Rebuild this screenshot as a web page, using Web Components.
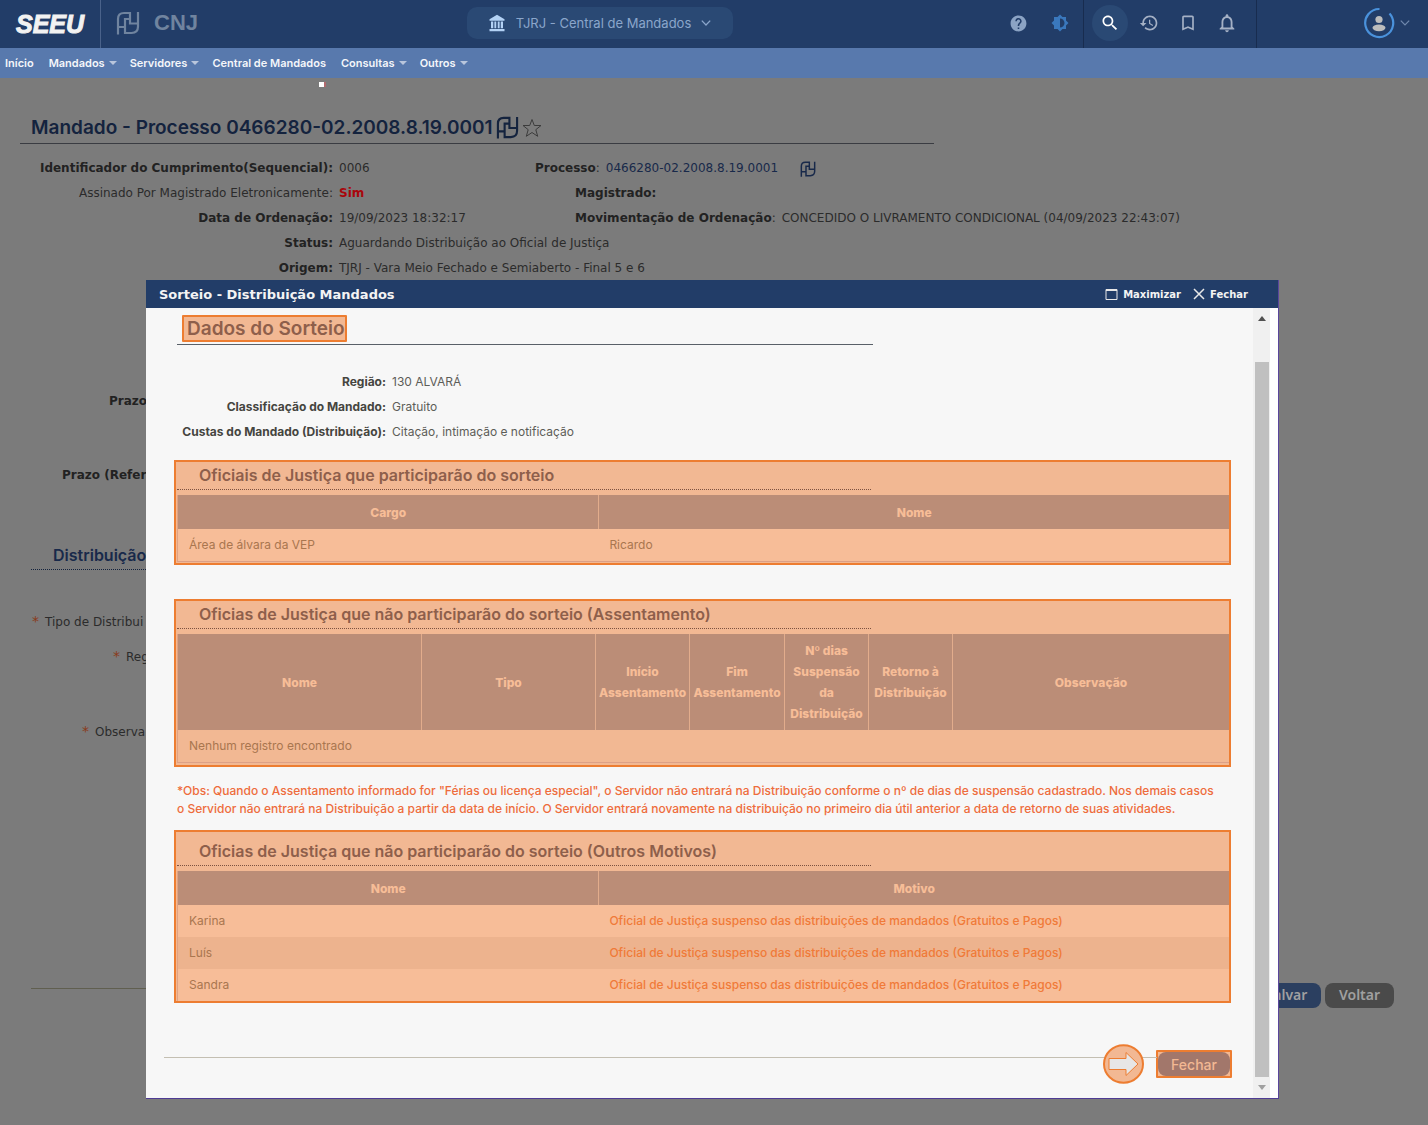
<!DOCTYPE html>
<html lang="pt-BR">
<head>
<meta charset="utf-8">
<title>SEEU - Central de Mandados</title>
<style>
  html { background: #7b7b7b; }
  body { margin: 0; font-family: Inter, "Liberation Sans", sans-serif; font-size: 12px; color: #222; }
</style>
</head>
<body>
<seeu-page></seeu-page>
<script>
const ICONS = {
  help: 'M12 2C6.48 2 2 6.48 2 12s4.48 10 10 10 10-4.48 10-10S17.52 2 12 2zm1 17h-2v-2h2v2zm2.07-7.75l-.9.92C13.45 12.9 13 13.5 13 15h-2v-.5c0-1.1.45-2.1 1.17-2.83l1.24-1.26c.37-.36.59-.86.59-1.41 0-1.1-.9-2-2-2s-2 .9-2 2H8c0-2.21 1.79-4 4-4s4 1.79 4 4c0 .88-.36 1.68-.93 2.25z',
  contrast: 'M20 8.69V4h-4.69L12 .69 8.69 4H4v4.69L.69 12 4 15.31V20h4.69L12 23.31 15.31 20H20v-4.69L23.31 12 20 8.69zM12 18V6c3.31 0 6 2.69 6 6s-2.69 6-6 6z',
  search: 'M15.5 14h-.79l-.28-.27C15.41 12.59 16 11.11 16 9.5 16 5.91 13.09 3 9.5 3S3 5.91 3 9.5 5.91 16 9.5 16c1.61 0 3.09-.59 4.23-1.57l.27.28v.79l5 4.99L20.49 19l-4.99-5zm-6 0C7.01 14 5 11.99 5 9.5S7.01 5 9.5 5 14 7.01 14 9.5 11.99 14 9.5 14z',
  history: 'M13 3c-4.97 0-9 4.03-9 9H1l3.89 3.89.07.14L9 12H6c0-3.87 3.13-7 7-7s7 3.13 7 7-3.13 7-7 7c-1.93 0-3.68-.79-4.94-2.06l-1.42 1.42C8.27 19.99 10.51 21 13 21c4.97 0 9-4.03 9-9s-4.03-9-9-9zm-1 5v5l4.28 2.54.72-1.21-3.5-2.08V8H12z',
  bookmark: 'M17 3H7c-1.1 0-2 .9-2 2v16l7-3 7 3V5c0-1.1-.9-2-2-2zm0 15l-5-2.18L7 18V5h10v13z',
  bell: 'M12 22c1.1 0 2-.9 2-2h-4c0 1.1.89 2 2 2zm6-6v-5c0-3.07-1.64-5.64-4.5-6.32V4c0-.83-.67-1.5-1.5-1.5s-1.5.67-1.5 1.5v.68C7.63 5.36 6 7.92 6 11v5l-2 2v1h16v-1l-2-2zm-2 1H8v-6c0-2.48 1.51-4.5 4-4.5s4 2.02 4 4.5v6z',
  court: 'M12 1L2 7v2h20V7L12 1zM4 10v9h3v-9H4zm4.500 0v9h2.500v-9H8.500zm4.500 0v9h2.500v-9H13zm4 0v9h3v-9h-3zM2 20v3h20v-3H2z'
};

function define(name, html) {
  const template = document.createElement('template');
  template.innerHTML = html;
  customElements.define(name, class extends HTMLElement {
    constructor() {
      super();
      this.attachShadow({ mode: 'open' }).append(template.content.cloneNode(true));
    }
  });
}

/* Filled glyph taken from the icon table */
customElements.define('seeu-icon', class extends HTMLElement {
  connectedCallback() {
    const size = this.getAttribute('size') || 20;
    this.attachShadow({ mode: 'open' }).innerHTML =
      `<style>:host{display:inline-flex}svg{fill:currentColor}</style>
       <svg width="${size}" height="${size}" viewBox="0 0 24 24" aria-hidden="true"><path d="${ICONS[this.getAttribute('name')]}"/></svg>`;
  }
});

/* Interlaced mark of the judicial platform */
customElements.define('pdpj-mark', class extends HTMLElement {
  connectedCallback() {
    const size = this.getAttribute('size') || 24;
    this.attachShadow({ mode: 'open' }).innerHTML =
      `<style>:host{display:inline-flex}svg{fill:none;stroke:currentColor;stroke-width:2.2}</style>
       <svg width="${size}" height="${size}" viewBox="0 0 24 24" aria-hidden="true">
         <path d="M2 23.500V8q0-6 6-6h6v10.500h8M2 16h6M22 1v14.500q0 6.500-6.500 6.500H9V8h5"/></svg>`;
  }
});

define('seeu-header', `
<style>
  :host { display: flex; justify-content: space-between; height: 48px; background: #223d68; }
  div { display: flex; align-items: center; }
  button { all: unset; box-sizing: border-box; display: inline-flex; align-items: center; justify-content: center; cursor: pointer; }
  .logo { width: 100px; height: 48px; border-right: 1px solid #4a628a; justify-content: center; }
  .seeu { font: italic bold 25px/46px "Liberation Sans", sans-serif; color: #f2f2f2; -webkit-text-stroke: 1px #f2f2f2; }
  .pdpj { color: #70849f; margin: 0 14px 2px 15px; }
  .cnj { font: bold 22px/44px "Liberation Sans", sans-serif; color: #70849f; margin-bottom: 3px; }
  .unit { gap: 10px; width: 266px; height: 32px; border-radius: 10px; background: #2a4974; color: #8ba6cb; font-size: 13px; align-self: center; margin-bottom: 2px; }
  .unit seeu-icon { color: #b3d2f5; }
  .tools { height: 48px; }
  .ic { width: 36px; height: 36px; border-radius: 50%; color: #a5b1c5; }
  .help, .actions { box-sizing: border-box; height: 48px; padding-bottom: 2px; border-right: 1px solid #182c4f; }
  .help { gap: 5px; padding-right: 5px; }
  .actions { gap: 3px; padding-left: 8px; padding-right: 11px; }
  .ic.on { background: #2a4974; color: #fff; }
  .user { gap: 5px; box-sizing: border-box; width: 171px; justify-content: flex-end; padding: 0 18px 2px 0; }
</style>
<div>
  <div class="logo"><span class="seeu">SEEU</span></div>
  <pdpj-mark class="pdpj" size="24"></pdpj-mark>
  <span class="cnj">CNJ</span>
</div>
<button class="unit"><seeu-icon name="court" size="18"></seeu-icon>TJRJ - Central de Mandados
  <svg width="10" height="6" viewBox="0 0 10 6" fill="none" stroke="#8ba6cb" stroke-width="1.3"><path d="M.8.6L5 5 9.200.6"/></svg>
</button>
<div class="tools">
  <div class="help">
    <button class="ic" aria-label="Ajuda" style="color:#8ba3c4"><seeu-icon name="help" size="19"></seeu-icon></button>
    <button class="ic" aria-label="Contraste" style="color:#3a78bd"><seeu-icon name="contrast" size="18"></seeu-icon></button>
  </div>
  <div class="actions">
    <button class="ic on" aria-label="Pesquisar"><seeu-icon name="search"></seeu-icon></button>
    <button class="ic" aria-label="Recentes"><seeu-icon name="history"></seeu-icon></button>
    <button class="ic" aria-label="Favoritos"><seeu-icon name="bookmark"></seeu-icon></button>
    <button class="ic" aria-label="Avisos"><seeu-icon name="bell" size="22"></seeu-icon></button>
  </div>
  <div class="user">
    <svg width="32" height="32" viewBox="0 0 32 32"><path d="M16.500 2A14 14 0 1 0 26.500 6.500" fill="none" stroke="#4a92dc" stroke-width="2.200"/><circle cx="16" cy="12.500" r="3.600" fill="#bcbcbc"/><ellipse cx="16" cy="20.800" rx="6.500" ry="3.400" fill="#bcbcbc"/></svg>
    <svg width="10" height="6" viewBox="0 0 10 6" fill="none" stroke="#7089ad" stroke-width="1.2"><path d="M.8.6L5 5 9.200.6"/></svg>
  </div>
</div>`);

define('seeu-menu', `
<style>
  :host { display: block; background: #5879ad; }
  nav { display: flex; height: 30px; align-items: center; padding-left: 5px; gap: 15px; }
  a { color: #f4f6fa; text-decoration: none; font-size: 11px; font-weight: 600; line-height: 30px; display: flex; align-items: center; gap: 4px; }
  .sub { margin-right: -2px; }
  .sub::after { content: ""; border: 4px solid transparent; border-top-color: #b9c6dc; border-bottom: 0; }
</style>
<nav>
  <a href="#">Início</a><a href="#" class="sub">Mandados</a><a href="#" class="sub">Servidores</a>
  <a href="#">Central de Mandados</a><a href="#" class="sub">Consultas</a><a href="#" class="sub">Outros</a>
</nav>`);

define('warrant-view', `
<style>
  :host { display: block; padding: 4px 34px 0 20px; font-family: "DejaVu Sans", sans-serif; font-size: 12px; color: #2b2b2b; }
  .mark { width: 7px; height: 5px; margin-left: 299px; background: linear-gradient(90deg, #fff 5px, #b06a6e 5px); }
  h1 { margin: 25px 0 0; padding: 0 11px; height: 32px; width: 66.5%; min-width: 560px; display: flex; align-items: center; gap: 3px; border-bottom: 1px solid #3a3c42; box-sizing: border-box; color: #14233e; font: 600 19px/32px Inter, sans-serif; }
  .row { display: flex; line-height: 25px; padding-left: 11px; white-space: nowrap; }
  .first { margin-top: 12px; }
  .lab { width: 302px; text-align: right; margin-right: 6px; flex: none; }
  .val { width: 196px; flex: none; }
  b { color: #222; }
  .red { color: #a8060c; }
  a { color: #18294a; text-decoration: none; }
  .right { display: flex; align-items: center; gap: 6px; }
  .in { padding-left: 40px; }
  .right pdpj-mark { color: #18294a; margin-left: 16px; }
  .under { height: 25px; line-height: 25px; }
  .req::before { content: "*"; color: #8a3a1a; margin-right: 6px; font-size: 14px; }
  h2 { margin: 53px 0 39px 11px; width: 66%; box-sizing: border-box; padding-left: 22px; border-bottom: 1px dotted #14233e; color: #18294a; font: 600 16px/28px Inter, sans-serif; }
  .foot { display: flex; align-items: flex-start; gap: 4px; margin: 239px 0 0 11px; }
  .foot hr { flex: 1; border: 0; border-top: 1px solid #605f50; margin: 5px 0 0; }
  button { border: 0; border-radius: 8px; height: 25px; width: 69px; padding: 0 0 2px; font: 600 14px "Noto Sans", sans-serif; color: #a0a0a0; background: #4a4a4a; }
  .save { background: #2b3f60; }
</style>
<div class="mark"></div>
<h1><span>Mandado - Processo 0466280-02.2008.8.19.0001</span><pdpj-mark size="23"></pdpj-mark>
  <svg width="20" height="20" viewBox="0 0 20 20" fill="none" stroke="#3c3c3c" stroke-width="1"><path d="M10 1.500l2.300 6H19l-5.200 4.200 1.900 6.600L10 14.500l-5.700 3.800 1.900-6.600L1 7.500h6.700z"/></svg></h1>
<div class="row first"><b class="lab">Identificador do Cumprimento(Sequencial):</b><span class="val">0006</span>
  <span class="right"><span><b>Processo</b>:</span><a href="#">0466280-02.2008.8.19.0001</a><pdpj-mark size="16"></pdpj-mark></span></div>
<div class="row"><span class="lab">Assinado Por Magistrado Eletronicamente:</span><b class="val red">Sim</b><span class="right in"><b>Magistrado:</b></span></div>
<div class="row"><b class="lab">Data de Ordenação:</b><span class="val">19/09/2023 18:32:17</span>
  <span class="right in"><span><b>Movimentação de Ordenação</b>:</span><span>CONCEDIDO O LIVRAMENTO CONDICIONAL (04/09/2023 22:43:07)</span></span></div>
<div class="row"><b class="lab">Status:</b><span>Aguardando Distribuição ao Oficial de Justiça</span></div>
<div class="row"><b class="lab">Origem:</b><span>TJRJ - Vara Meio Fechado e Semiaberto - Final 5 e 6</span></div>
<div class="under" style="margin:108px 0 0 89px"><b>Prazo</b></div>
<div class="under" style="margin:49px 0 0 42px"><b>Prazo (Refer</b></div>
<h2>Distribuição</h2>
<div class="under req" style="margin-left:12px">Tipo de Distribui</div>
<div class="under req" style="margin:10px 0 0 93px">Reg</div>
<div class="under req" style="margin:50px 0 0 62px">Observa</div>
<div class="foot"><hr><button class="save">Salvar</button><button>Voltar</button></div>`);

/* Heading + table, drawn with the tutorial highlight */
customElements.define('draw-list', class extends HTMLElement {
  connectedCallback() {
    const data = JSON.parse(this.querySelector('script').textContent);
    const cols = data.widths.map(w => `<col${w ? ` style="width:${w}"` : ''}>`).join('');
    const head = data.head.map(h => `<th>${h}</th>`).join('');
    const rows = data.rows.map(r => '<tr>' + r.map((c, i) =>
      `<td${data.span ? ` colspan="${data.span}"` : ''}${data.alert && i ? ' class="alert"' : ''}>${c}</td>`).join('') + '</tr>').join('');
    this.attachShadow({ mode: 'open' }).innerHTML = `
<style>
  :host { display: block; border: 2px solid #ed7d31; background: #f2b893; padding: 0 0 var(--pad-bottom, 1px) 1px; }
  h3 { margin: var(--pad-top, 0) 0 5px; width: 66%; box-sizing: border-box; padding: 0 0 1px 22px; font-size: 16px; font-weight: 600; line-height: 26px; color: #8e5f4b; border-bottom: 1px dotted #7d5140; }
  table { width: 100%; table-layout: fixed; border-collapse: separate; border-spacing: 0; border-left: 1px solid #dfa283; border-bottom: var(--table-line, 1px) solid #dca086; box-sizing: border-box; }
  th { height: 34px; padding: 0; box-sizing: border-box; background: #bb8d77; color: #f7bd97; font-size: 12px; font-weight: 800; line-height: 21px; border-left: 1px solid #e2ac8c; }
  th:first-child { border-left: 0; }
  :host([tall]) th { height: 96px; }
  td { height: 32px; box-sizing: border-box; padding: 0 11px 1px; background: #f7bd98; color: #a9764f; font-size: 12px; line-height: 21px; }
  :host([tall]) td { background: #f2b893; }
  tr:nth-child(even) td { background: #edb38e; }
  td.alert { color: #f07a38; font-weight: 500; }
</style>
<h3>${data.title}</h3>
<table><colgroup>${cols}</colgroup><thead><tr>${head}</tr></thead><tbody>${rows}</tbody></table>`;
  }
});

define('modal-window', `
<style>
  :host { display: block; box-sizing: border-box; background: #fff; border-right: 1px solid #5a469c; border-bottom: 1px solid #4f3b94; }
  header { display: flex; align-items: center; height: 28px; padding: 0 30px 0 13px; background: #223d68; color: #f4f4f4; font-family: "DejaVu Sans", sans-serif; }
  h2 { margin: 0; flex: 1; font-size: 13px; line-height: 26px; padding-top: 2px; }
  button { all: unset; display: flex; align-items: center; gap: 5px; margin-left: 12px; font-size: 10px; font-weight: bold; cursor: pointer; }
  .body { display: flex; background: #f7f7f7; }
  .content { flex: 1; min-width: 0; padding: 7px 22px 14px 28px; }
  .scroll { width: 17px; flex: none; display: flex; flex-direction: column; align-items: center; background: #f0f0f0; border-right: 8px solid #fff; }
  .thumb { flex: 1; width: 14px; margin-top: 33px; background: #c0c0c0; }
  .scroll svg { margin: 8px 0; }
</style>
<header><h2><slot name="title"></slot></h2>
  <button><svg width="13" height="11" fill="none" stroke="#e8e8e8"><path d="M1 .5h11v10H1zM1 1.500h11"/></svg>Maximizar</button>
  <button><svg width="12" height="12" fill="none" stroke="#e8e8e8" stroke-width="1.500"><path d="M1 1l10 10M11 1L1 11"/></svg>Fechar</button>
</header>
<div class="body"><div class="content"><slot></slot></div>
  <div class="scroll"><svg width="8" height="5"><path d="M0 5L4 0l4 5z" fill="#505050"/></svg><div class="thumb"></div><svg width="8" height="5"><path d="M0 0l4 5 4-5z" fill="#a0a0a0"/></svg></div>
</div>`);

define('draw-summary', `
<style>
  :host { display: block; margin-left: 3px; color: #5d5d58; }
  .head { width: 66%; border-bottom: 1px solid #596068; padding: 0 0 2px 5px; box-sizing: border-box; }
  h2 { margin: 0; display: inline-block; vertical-align: top; border: 2px solid #ed7d31; border-radius: 1px; background: #f2b893; color: #8e5f4b; font-size: 19px; font-weight: 600; line-height: 23px; padding: 0 0 0 3px; }
  dl { margin: 24px 0 16px; display: grid; grid-template-columns: 209px 1fr; column-gap: 6px; line-height: 25px; }
  dt { text-align: right; font-weight: 700; color: #45453f; }
  dd { margin: 0; }
</style>
<div class="head"><h2>Dados do Sorteio</h2></div>
<dl><dt>Região:</dt><dd>130 ALVARÁ</dd><dt>Classificação do Mandado:</dt><dd>Gratuito</dd><dt>Custas do Mandado (Distribuição):</dt><dd>Citação, intimação e notificação</dd></dl>`);

define('modal-actions', `
<style>
  :host { display: flex; position: relative; align-items: center; justify-content: flex-end; gap: 12px; margin: 41px -1px 0 -10px; }
  hr { position: absolute; left: 0; right: 75px; top: 13px; margin: 0; border: 0; border-top: 1px solid #c4bfb2; }
  svg { position: relative; }
  span { border: 2px solid #ed7d31; background: #f2b893; border-radius: 1px; }
  button { display: block; border: 0; border-radius: 8px; background: #a2776b; color: #f2b893; width: 72px; height: 24px; padding: 0; font: 500 14px Inter, sans-serif; }
</style>
<hr>
<svg width="41" height="40" viewBox="0 0 41 40"><ellipse cx="20.500" cy="20" rx="19.500" ry="18.700" fill="#f2b893" stroke="#ed7d31" stroke-width="2"/><path d="M6 14.500h17V8.500L35 20 23 31.500v-6H6z" fill="#e7e6e6" stroke="#ed7d31"/></svg>
<span><button>Fechar</button></span>`);

define('seeu-page', `
<style>
  :host { display: block; position: relative; min-height: 100vh; }
  modal-window { position: absolute; top: 280px; left: 146px; right: 149px; }
  p { margin: 15px 6px 12px 3px; color: #ee6c3c; line-height: 18px; font-size: 12px; font-weight: 500; padding-right: 4px; }
  .second { margin-top: 34px; --pad-bottom: 2px; }
  .third { --pad-top: 6px; --pad-bottom: 0; --table-line: 0; }
</style>
<seeu-header></seeu-header>
<seeu-menu></seeu-menu>
<warrant-view></warrant-view>
<modal-window>
  <span slot="title">Sorteio - Distribuição Mandados</span>
  <draw-summary></draw-summary>
  <draw-list><script type="application/json">{"title":"Oficiais de Justiça que participarão do sorteio","widths":["40%","60%"],"head":["Cargo","Nome"],"rows":[["Área de álvara da VEP","Ricardo"]]}<\/script></draw-list>
  <draw-list class="second" tall><script type="application/json">{"title":"Oficias de Justiça que não participarão do sorteio (Assentamento)","widths":["243px","174px","94px","95px","84px","84px",""],"head":["Nome","Tipo","Início Assentamento","Fim Assentamento","Nº dias Suspensão da Distribuição","Retorno à Distribuição","Observação"],"span":7,"rows":[["Nenhum registro encontrado"]]}<\/script></draw-list>
  <p>*Obs: Quando o Assentamento informado for "Férias ou licença especial", o Servidor não entrará na Distribuição conforme o nº de dias de suspensão cadastrado. Nos demais casos o Servidor não entrará na Distribuição a partir da data de início. O Servidor entrará novamente na distribuição no primeiro dia útil anterior a data de retorno de suas atividades.</p>
  <draw-list class="third"><script type="application/json">{"title":"Oficias de Justiça que não participarão do sorteio (Outros Motivos)","widths":["40%","60%"],"alert":true,"head":["Nome","Motivo"],"rows":[["Karina","Oficial de Justiça suspenso das distribuições de mandados (Gratuitos e Pagos)"],["Luís","Oficial de Justiça suspenso das distribuições de mandados (Gratuitos e Pagos)"],["Sandra","Oficial de Justiça suspenso das distribuições de mandados (Gratuitos e Pagos)"]]}<\/script></draw-list>
  <modal-actions></modal-actions>
</modal-window>`);
</script>
</body>
</html>
